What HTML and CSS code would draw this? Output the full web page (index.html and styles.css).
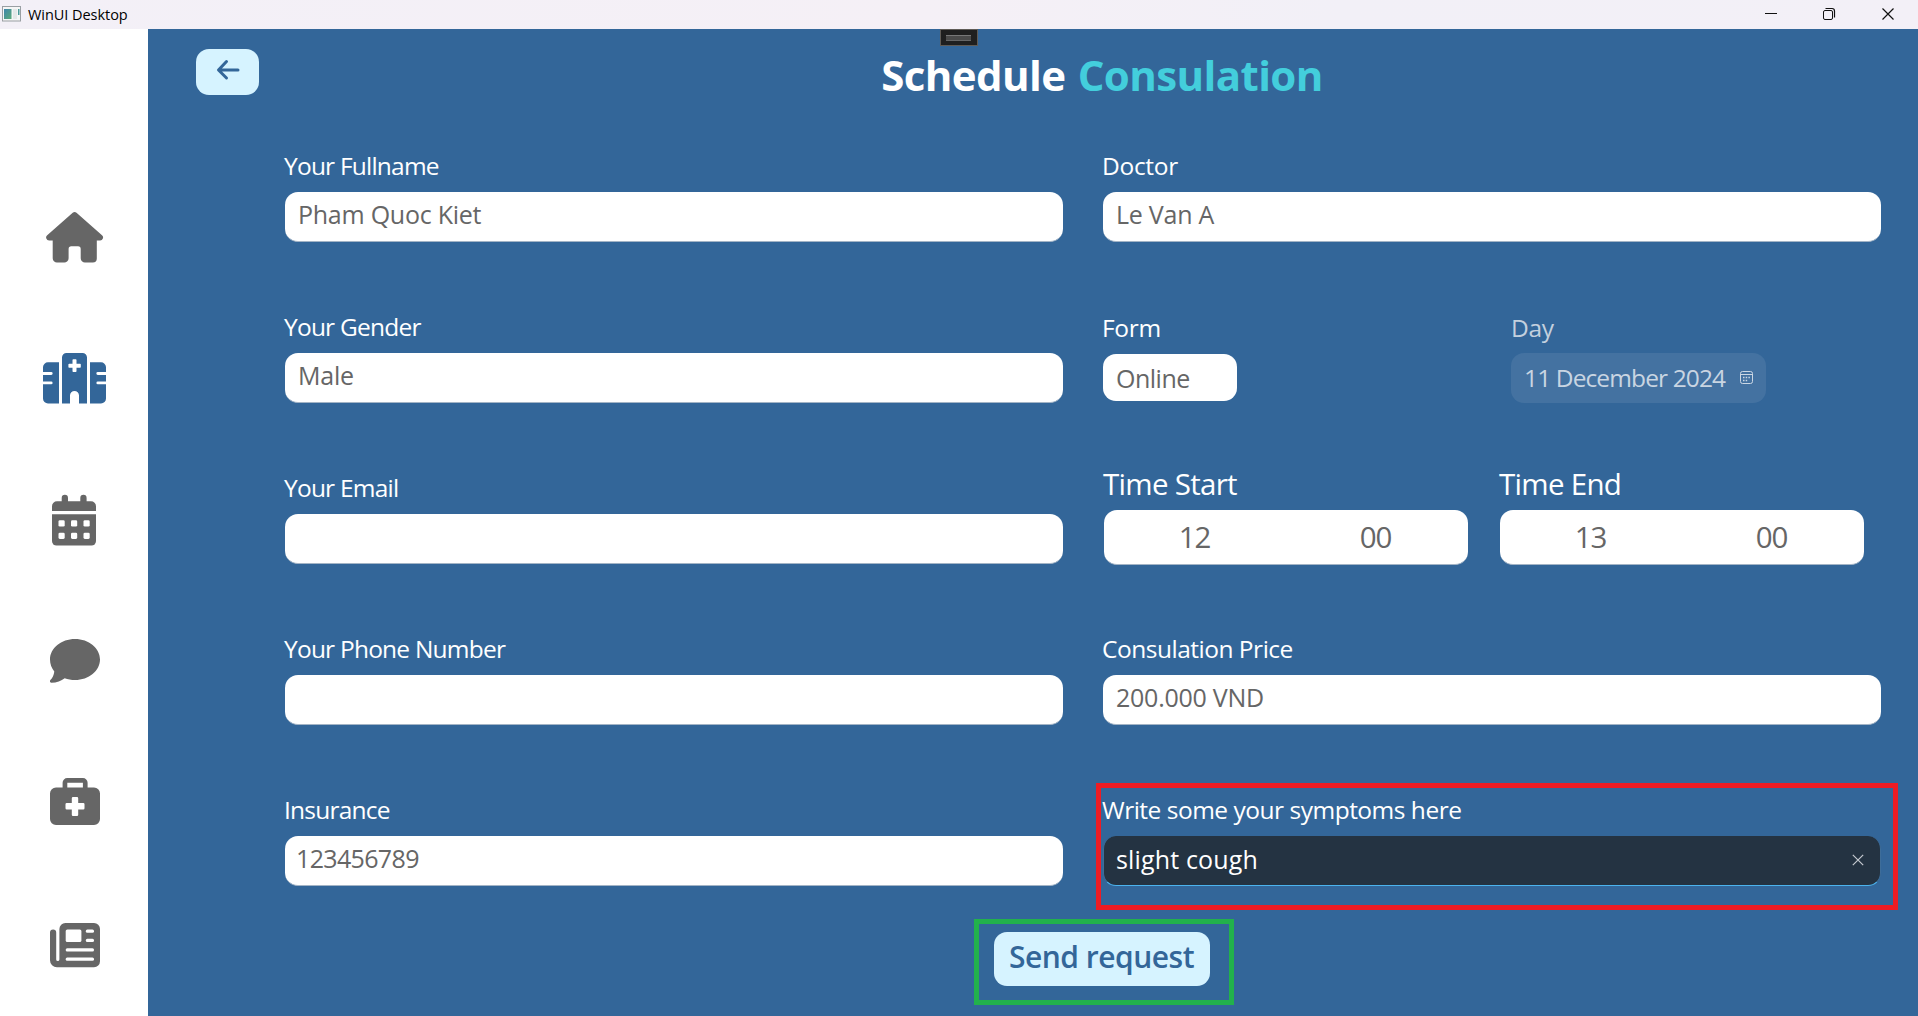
FILE: index.html
```html
<!DOCTYPE html>
<html lang="en">
<head>
<meta charset="utf-8">
<title>WinUI Desktop</title>
<link rel="stylesheet" href="styles.css">
</head>
<body>
<div class="window">
  <header class="titlebar">
    <svg class="app-icon" width="20" height="16" viewBox="0 0 20 16">
      <defs><linearGradient id="pane" x1="0" y1="0" x2="1" y2="1"><stop offset="0" stop-color="#3e86ad"/><stop offset="1" stop-color="#5cab78"/></linearGradient></defs>
      <rect x=".5" y=".5" width="18" height="14.5" fill="#f5f6f6" stroke="#9a9fa3"/>
      <rect x="2" y="3" width="7.500" height="10" fill="url(#pane)"/>
      <rect x="11" y="3" width="4" height="10" fill="#e4e8e8"/>
      <rect x="16" y="3" width="1.500" height="6" fill="#4b9a9a"/>
    </svg>
    <span class="app-name">WinUI Desktop</span>
    <div class="caption-buttons">
      <svg width="58" height="29" viewBox="0 0 58 29"><path d="M10 13.500h12" stroke="#111" fill="none"/></svg>
      <svg width="58" height="29" viewBox="0 0 58 29" fill="none" stroke="#111"><rect x="10.500" y="10.500" width="9" height="9" rx="1.500"/><path d="M12.500 8.500h6.500q2.500 0 2.500 2.500v6.500" stroke-width="1.200"/></svg>
      <svg width="58" height="29" viewBox="0 0 58 29"><path d="M11.500 8.500l11 11M22.500 8.500l-11 11" stroke="#111" stroke-width="1.200" fill="none"/></svg>
    </div>
  </header>
  <div class="body">
    <nav class="sidebar">
      <a class="nav-item"><svg viewBox="0 161 148 142"><path fill-rule="evenodd" d="M72.700 212.800a2.800 2.800 0 0 1 3.800 0L102 235.200a3 3 0 0 1-2 5.300H96.800V258.500a4 4 0 0 1-4 4H85a4.300 4.300 0 0 1-4.300-4.300V249a2.700 2.700 0 0 0-2.700-2.700H71.300a2.700 2.700 0 0 0-2.700 2.700V258.200a4.300 4.300 0 0 1-4.300 4.300H57a4.300 4.300 0 0 1-4.300-4.300V240.500H49.200a3 3 0 0 1-2-5.300z"/></svg></a>
      <a class="nav-item active"><svg viewBox="0 303 148 142">
        <path d="M48 362.300h11v41.200H48a5 5 0 0 1-5-5V384.300h8.200a1.400 1.400 0 0 0 0-2.800H43V375h8.200a1.400 1.400 0 0 0 0-2.900H43V367a5 5 0 0 1 5-4.700z"/>
        <path d="M101 362.300H90v41.200h11a5 5 0 0 0 5-5V384.300h-8.200a1.400 1.400 0 0 1 0-2.800H106V375h-8.200a1.400 1.400 0 0 1 0-2.900H106V367a5 5 0 0 0-5-4.700z"/>
        <path fill-rule="evenodd" d="M66.500 353h16a4.500 4.500 0 0 1 4.500 4.500v46H79V395.500a4.500 4.500 0 0 0-9 0V403.500H62V357.500a4.500 4.500 0 0 1 4.500-4.500zM73.300 359.300a.8.8 0 0 0-.8.8V363.700H69.200a.8.8 0 0 0-.8.8V367a.8.8 0 0 0 .8.800H72.500V371.300a.8.8 0 0 0 .8.800H75.700a.8.8 0 0 0 .8-.8V367.800H80a.8.8 0 0 0 .8-.8V364.500a.8.8 0 0 0-.8-.8H76.500V360.100a.8.8 0 0 0-.8-.8z"/></svg></a>
      <a class="nav-item"><svg viewBox="0 445 148 142">
        <path d="M61.700 501.300V498a3.150 3.150 0 0 1 6.300 0V501.300H80.300V498a3.150 3.150 0 0 1 6.300 0V501.300H91a5 5 0 0 1 5 5V511H52V506.300a5 5 0 0 1 5-5z"/>
        <path d="M52 514.200H96V541a4.500 4.500 0 0 1-4.500 4.500H56.500A4.500 4.500 0 0 1 52 541z"/>
        <g class="cut"><rect x="58.500" y="520.300" width="6.200" height="6.200" rx="1.300"/><rect x="71" y="520.300" width="6.200" height="6.200" rx="1.300"/><rect x="83.500" y="520.300" width="6.200" height="6.200" rx="1.300"/><rect x="58.500" y="532.700" width="6.200" height="6.200" rx="1.300"/><rect x="71" y="532.700" width="6.200" height="6.200" rx="1.300"/><rect x="83.500" y="532.700" width="6.200" height="6.200" rx="1.300"/></g></svg></a>
      <a class="nav-item"><svg viewBox="0 587 148 142"><path d="M75 639c13.800 0 25 9.200 25 20.500S88.800 680 75 680c-3.700 0-7.200-.6-10.300-1.800-3.400 2.600-8 4.500-13.200 4.500a1.500 1.500 0 0 1-1.100-2.600c1.900-2 3.600-5 3.900-8.600C51.600 668 50 664 50 659.500 50 648.200 61.200 639 75 639z"/></svg></a>
      <a class="nav-item"><svg viewBox="0 729 148 142">
        <path fill-rule="evenodd" d="M67.300 778H82.900a4.700 4.700 0 0 1 4.700 4.700V787.500H94a6 6 0 0 1 6 6V819a6 6 0 0 1-6 6H56a6 6 0 0 1-6-6V793.500a6 6 0 0 1 6-6H62.600V782.700a4.700 4.700 0 0 1 4.700-4.700zM67.300 782.700V787.500H82.900V782.700z"/>
        <path class="cut" d="M73 797h4a1.200 1.200 0 0 1 1.200 1.200V803H83.300a1.200 1.200 0 0 1 1.200 1.200v4a1.200 1.200 0 0 1-1.200 1.200H78.200V814.700a1.200 1.200 0 0 1-1.200 1.200h-4a1.200 1.200 0 0 1-1.200-1.200V809.400H66.700a1.200 1.200 0 0 1-1.200-1.200v-4a1.200 1.200 0 0 1 1.200-1.200H71.800V798.200a1.200 1.200 0 0 1 1.200-1.200z"/></svg></a>
      <a class="nav-item"><svg viewBox="0 871 148 142">
        <path d="M65.500 923H94a6 6 0 0 1 6 6V961.300a6 6 0 0 1-6 6H57a7 7 0 0 1-7-7V932.500a3.100 3.100 0 0 1 6.200 0V959.500a1.600 1.600 0 0 0 3.200 0V929a6 6 0 0 1 6.100-6z"/>
        <g class="cut"><rect x="65.700" y="929.500" width="15.700" height="12.500" rx="1.600"/><rect x="85.800" y="929.500" width="8.200" height="3.200" rx="1.500"/><rect x="85.800" y="938.800" width="8.200" height="3.200" rx="1.500"/><rect x="65.700" y="948.200" width="28.300" height="3.200" rx="1.500"/><rect x="65.700" y="957.600" width="28.300" height="3.200" rx="1.500"/></g></svg></a>
    </nav>
    <main class="content">
      <div class="debug-bar"></div>
      <div class="page-head">
        <button class="back"><svg width="24" height="22" viewBox="0 0 24 22"><path d="M10.500 2.500L2.500 11l8 8M3 11h19" fill="none" stroke="#336699" stroke-width="3" stroke-linecap="round" stroke-linejoin="round"/></svg></button>
        <h1>Schedule <span>Consulation</span></h1>
      </div>
      <form class="form">
        <div class="column">
          <div class="field"><label>Your Fullname</label><input value="Pham Quoc Kiet"></div>
          <div class="field"><label>Your Gender</label><input value="Male"></div>
          <div class="field"><label>Your Email</label><input></div>
          <div class="field"><label>Your Phone Number</label><input></div>
          <div class="field"><label>Insurance</label><input class="digits" value="123456789"></div>
        </div>
        <div class="column right">
          <div class="field short-label"><label>Doctor</label><input value="Le Van A"></div>
          <div class="field split">
            <div class="form-kind short-label"><label>Form</label><input value="Online"></div>
            <div class="day short-label"><label>Day</label>
              <div class="date-box"><span>11 December 2024</span>
                <svg width="13" height="13" viewBox="0 0 13 13" fill="none" stroke="#cbd7e4"><rect x=".5" y=".5" width="12" height="12" rx="2"/><path d="M1 3.500h11"/><path d="M3 6.500h7M3 9.500h5" stroke-width="1.500" stroke-dasharray="1.500 1.200"/></svg>
              </div>
            </div>
          </div>
          <div class="field times">
            <div><label>Time Start</label><div class="time-box"><span>12</span><span>00</span></div></div>
            <div><label>Time End</label><div class="time-box"><span>13</span><span>00</span></div></div>
          </div>
          <div class="field"><label>Consulation Price</label><input value="200.000 VND"></div>
          <div class="field symptoms"><label>Write some your symptoms here</label>
            <div class="dark-input"><span>slight cough</span><svg width="12" height="12" viewBox="0 0 12 12"><path d="M.8.800l10.400 10.400M11.200.800L.8 11.200" stroke="#c5cad0" stroke-width="1.200"/></svg></div>
            <div class="mark red"></div>
          </div>
        </div>
      </form>
      <div class="actions"><div class="send-wrap"><button class="send" type="button">Send request</button><div class="mark green"></div></div></div>
    </main>
  </div>
</div>
</body>
</html>
```
FILE: styles.css
```css
* { box-sizing: border-box; }
body { margin: 0; font-family: "Open Sans", "Noto Sans", sans-serif; }
button, input { font: inherit; border: 0; margin: 0; }
.window { width: 1918px; height: 1016px; overflow: hidden; display: flex; flex-direction: column; }
.titlebar { height: 29px; flex: none; display: flex; align-items: center; background: linear-gradient(90deg, #f3f0f7, #f5f0f6 48%, #f2f0f7 70%, #f3f0f7); }
.app-icon { margin: 0 6px 2px 2px; }
.app-name { font-size: 14.5px; letter-spacing: -0.05px; color: #000; line-height: 29px; }
.caption-buttons { display: flex; margin-left: auto; margin-right: -11px; }
.caption-buttons svg { display: block; }

.body { flex: 1; display: flex; min-height: 0; }
.sidebar { width: 148px; flex: none; padding-top: 132px; background: #fff; overflow: hidden; }
.nav-item { display: block; height: 142px; color: #666; }
.nav-item svg { display: block; width: 148px; height: 142px; fill: currentColor; }
.nav-item.active { color: #336699; }
.nav-item .cut { fill: #fff; }

.content { position: relative; flex: 1; background: #336699; }
.debug-bar { position: absolute; left: 792px; top: 0; width: 38px; height: 17px; background: #1f1f1f; border: 1px solid #5f5b56; }
.debug-bar::after { content: ""; position: absolute; left: 5px; top: 5px; width: 25px; height: 4px; background: #4a4a4a; border-top: 1px solid #777; border-bottom: 1px solid #666; }

.page-head { display: grid; grid-template-columns: 137px 1fr; height: 117px; padding-top: 20px; }
.back { width: 63px; height: 46px; margin-left: 48px; padding: 0 0 5px; border-radius: 13px; background: #d6f3ff; display: flex; align-items: center; justify-content: center; }
h1 { margin: 0; padding-left: 1px; text-align: center; color: #fff; font-size: 42px; font-weight: 700; line-height: 51px; letter-spacing: -0.6px; }
h1 span { color: #43cedc; margin-left: 2px; }

.form { display: grid; grid-template-columns: 778px 778px; column-gap: 40px; padding-left: 137px; }
.column { display: grid; grid-template-rows: repeat(4, 161px) 142px; }
label { display: block; height: 46px; line-height: 39px; margin-left: -1px; font-size: 24.5px; letter-spacing: -0.78px; color: #fff; white-space: nowrap; }
.right label { letter-spacing: -0.49px; }
.right .short-label label { letter-spacing: -0.3px; }
input { display: block; width: 100%; height: 50px; padding: 0 13px 5px; border-radius: 13px; background: #fff; border-bottom: 1px solid #a3b4c6; color: #666; font-size: 25px; letter-spacing: -0.25px; }
input.digits { padding-left: 11px; letter-spacing: -0.65px; }

.split { display: flex; }
.split label { height: 47px; line-height: 42px; }
.form-kind { width: 408px; }
.form-kind input { width: 134px; height: 47px; padding-bottom: 0; border-bottom: 0; letter-spacing: -0.5px; }
.day label { color: #c3d0de; height: 46px; margin-left: 0; }
.date-box { width: 255px; height: 50px; padding: 0 13px 1px; display: flex; align-items: center; justify-content: space-between; border-radius: 13px; background: #4472a1; color: #c9d5e2; font-size: 24.5px; letter-spacing: -0.88px; white-space: nowrap; }

.times { display: flex; gap: 32px; padding-left: 1px; }
.right .times label { height: 42px; line-height: 32px; font-size: 29.5px; letter-spacing: -0.7px; }
.time-box { width: 364px; height: 55px; padding: 0 2px 2px 0; display: grid; grid-template-columns: 1fr 1fr; align-items: center; text-align: center; border-radius: 13px; background: #fff; border-bottom: 1px solid #a3b4c6; color: #666; font-size: 29.5px; letter-spacing: -1px; }

.symptoms { position: relative; }
.dark-input { height: 50px; padding: 0 16px 4px 12px; display: flex; align-items: center; justify-content: space-between; border-radius: 13px; background: #243342; border: 1px solid #3e6d99; border-top: 0; border-bottom: 1px solid #4cb4ee; color: #fff; font-size: 25px; letter-spacing: 0.15px; }
.dark-input svg { margin-top: 2px; }
.mark { position: absolute; pointer-events: none; }
.red { left: -7px; top: -7px; width: 802px; height: 127px; border: 5px solid #ed1c24; }

.actions { display: flex; justify-content: center; padding-left: 137px; }
.send-wrap { position: relative; }
.send { display: block; width: 216px; height: 54px; padding: 0 0 5px; border-radius: 13px; background: #d6f3ff; color: #336699; font-size: 30px; font-weight: 600; letter-spacing: -0.5px; }
.green { left: -20px; top: -13px; width: 260px; height: 86px; border: 5px solid #22b14c; }
```
